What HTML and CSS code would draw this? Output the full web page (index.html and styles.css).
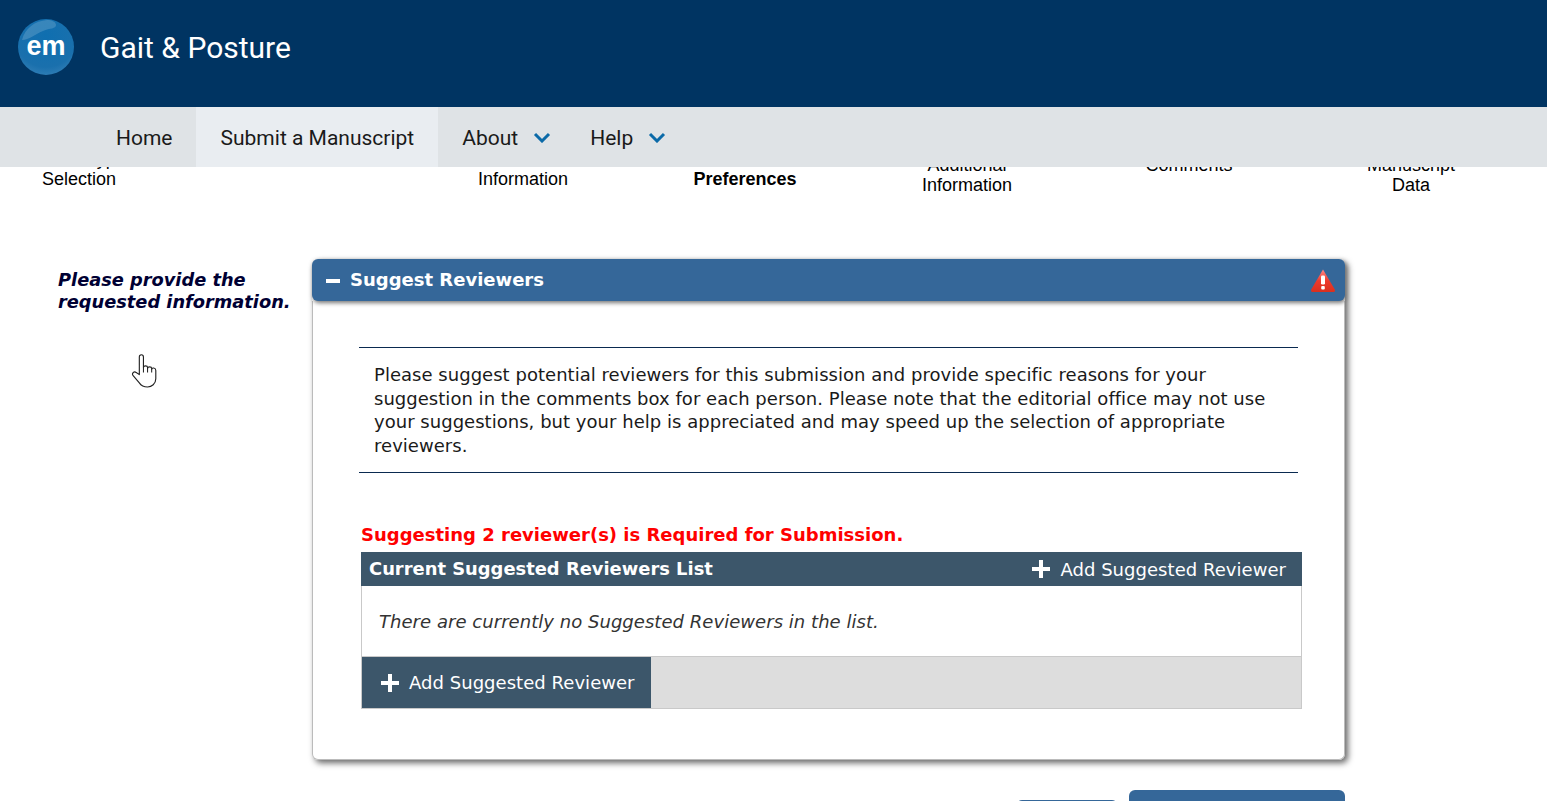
FILE: index.html
```html
<!DOCTYPE html>
<html lang="en">
<head>
<meta charset="utf-8">
<title>Gait &amp; Posture</title>
<link rel="stylesheet" href="styles.css">
</head>
<body>
<header class="banner">
  <svg class="logo" width="58" height="58" viewBox="0 0 58 58" aria-hidden="true">
    <defs>
      <radialGradient id="orb" cx="0.5" cy="0.3" r="0.8">
        <stop offset="0" stop-color="#0f6fb0"/>
        <stop offset="0.7" stop-color="#1a70ad"/>
        <stop offset="1" stop-color="#3a84ba"/>
      </radialGradient>
    </defs>
    <circle cx="29" cy="29" r="28" fill="url(#orb)"/>
    <path d="M5 22C8 10 18 3 30 2c5 0 9 2 9 5 0 4-6 3-13 6-8 3-14 9-21 9z" fill="#fff" opacity=".16"/>
    <text x="29" y="37" text-anchor="middle" class="logo-text">em</text>
  </svg>
  <h1 class="journal">Gait &amp; Posture</h1>
</header>
<nav class="nav">
  <a class="nav-item">Home</a>
  <a class="nav-item nav-active">Submit a Manuscript</a>
  <a class="nav-item nav-menu">About
    <svg class="chev" width="18" height="11" viewBox="0 0 18 11" aria-hidden="true"><path d="M2 2l7 7 7-7" fill="none" stroke="#0b6aa8" stroke-width="3"/></svg>
  </a>
  <a class="nav-item nav-menu">Help
    <svg class="chev" width="18" height="11" viewBox="0 0 18 11" aria-hidden="true"><path d="M2 2l7 7 7-7" fill="none" stroke="#0b6aa8" stroke-width="3"/></svg>
  </a>
</nav>
<ol class="steps">
  <li class="step">Article Type<br>Selection</li>
  <li class="step">Attach Files</li>
  <li class="step">General<br>Information</li>
  <li class="step step-current">Review<br>Preferences</li>
  <li class="step step-low">Additional<br>Information</li>
  <li class="step step-low">Comments</li>
  <li class="step step-low">Manuscript<br>Data</li>
</ol>
<main class="main">
  <aside class="hint">
    <p class="hint-text">Please provide the requested information.</p>
  </aside>
  <div class="content">
    <section class="panel">
      <h2 class="panel-head">
        <span class="minus"></span>
        <span class="panel-title">Suggest Reviewers</span>
        <svg class="warn" width="26" height="25" viewBox="0 0 26 25" aria-hidden="true">
          <defs>
            <linearGradient id="warnfill" x1="0" y1="0" x2="0" y2="1">
              <stop offset="0" stop-color="#f88"/>
              <stop offset="0.5" stop-color="#ee3a2c"/>
              <stop offset="1" stop-color="#d9301f"/>
            </linearGradient>
          </defs>
          <path d="M13 1.500L24.800 21.500Q25.500 24 23.500 24H2.500Q.5 24 1.200 21.500Z" fill="url(#warnfill)"/>
          <rect x="11" y="7.500" width="4" height="9" rx="1.200" fill="#fff"/>
          <rect x="11.200" y="18" width="3.600" height="3.600" rx="1" fill="#fff"/>
        </svg>
      </h2>
      <div class="panel-body">
        <p class="intro">Please suggest potential reviewers for this submission and provide specific reasons for your suggestion in the comments box for each person. Please note that the editorial office may not use your suggestions, but your help is appreciated and may speed up the selection of appropriate reviewers.</p>
        <p class="required">Suggesting 2 reviewer(s) is Required for Submission.</p>
        <div class="list">
          <div class="list-head">
            <span class="list-title">Current Suggested Reviewers List</span>
            <a class="add add-top"><span class="plus"></span>Add Suggested Reviewer</a>
          </div>
          <div class="list-empty">There are currently no Suggested Reviewers in the list.</div>
          <div class="list-foot">
            <a class="add add-foot"><span class="plus"></span>Add Suggested Reviewer</a>
          </div>
        </div>
      </div>
    </section>
    <div class="actions">
      <span class="btn btn-back"></span>
      <span class="btn btn-next"></span>
    </div>
  </div>
</main>
<svg class="cursor" width="29" height="35" viewBox="0 0 28 34" aria-hidden="true">
  <path d="M8 21V4c0-3 4-3 4 0v10c0-2 4-2 4 0v1c0-2 4-2 4 0v1c0-2 4-2 4 1v8c0 5-4 8-8 8s-6-1-8-4l-6-7c-2-2 1-5 3-3z" fill="#fff" stroke="#222" stroke-width="1.100" stroke-linejoin="round"/>
  <path d="M12 14v5M16 15v4M20 16v3" fill="none" stroke="#222" stroke-width="1"/>
</svg>
</body>
</html>
```
FILE: styles.css
```css
* { box-sizing: border-box; }
html, body { margin: 0; padding: 0; height: 801px; overflow: hidden; background: #fff; }
body { font-family: "DejaVu Sans", Verdana, sans-serif; color: #111; position: relative; }

.banner { height: 107px; background: #003462; display: flex; align-items: flex-start; padding: 18px 0 0 17px; }
.logo { flex: none; display: block; }
.logo-text { font-family: "Liberation Sans", sans-serif; font-weight: 700; font-size: 27px; fill: #fff; }
.journal { margin: 8px 0 0 25px; font: 400 30px/44px Roboto, sans-serif; color: #fff; }

.nav { position: relative; z-index: 2; height: 60px; background: #dfe3e6; display: flex; padding-left: 92px; font: 400 21px/62px Roboto, sans-serif; color: #1a1a1a; }
.nav-item { padding: 1px 24px 0; display: flex; align-items: center; }
.nav-menu { padding-right: 15px; }
.nav-active { background: #e9edf1; margin-left: -1px; padding-left: 25px; }
.chev { margin: 0 0 0 15px; }

.steps { list-style: none; display: flex; margin: -18px 0 0 -32px; padding: 0; height: 75px; font: 400 18px/20px "Liberation Sans", sans-serif; color: #000; }
.step { flex: 0 0 222px; text-align: center; }
.step-low { padding-top: 6px; }
.step-current { font-weight: 700; }

.main { display: flex; padding: 35px 0 0 58px; }
.hint { flex: 0 0 254px; }
.hint-text { margin: 10px 0 0; width: 245px; font-size: 17.800px; line-height: 22px; font-weight: 700; font-style: italic; color: #000033; }
.content { flex: 0 0 1033px; width: 1033px; }

.panel { box-shadow: 3px 3px 6px #666; border-radius: 6px; background: #fff; }
.panel-head { margin: 0; height: 42px; display: flex; align-items: center; padding: 0 8px 0 14px; background: #356799; border-radius: 6px; box-shadow: 1px 2px 4px #777; position: relative; }
.minus { width: 14px; height: 4px; background: #fff; flex: none; margin: 2px 10px 0 0; }
.panel-title { flex: 1; padding-bottom: 2px; font-size: 18px; font-weight: 700; color: #fff; }
.warn { flex: none; margin: 1px 1px 0 0; }
.panel-body { height: 459px; padding: 46px 0 0 46px; border: 1px solid #bbb; border-top: 0; border-radius: 0 0 6px 6px; }

.intro { margin: 0; width: 939px; padding: 15px 14px 15px 15px; border-top: 1px solid #0a2a50; border-bottom: 1px solid #0a2a50; font-size: 18px; line-height: 23.600px; letter-spacing: .03px; color: #1a1a1a; }
.required { margin: 50px 0 5px 2px; font-size: 18px; line-height: 24px; font-weight: 700; color: #f00; }

.list { width: 941px; margin-left: 2px; }
.list-head { height: 34px; background: #3c566a; display: flex; align-items: center; justify-content: space-between; padding: 0 16px 2px 8px; color: #fff; }
.list-title { font-size: 17.900px; font-weight: 700; }
.add { display: flex; align-items: center; color: #fff; font-size: 18px; letter-spacing: .04px; white-space: nowrap; }
.add-top { margin-top: 2px; }
.plus { width: 18px; height: 18px; margin-right: 10px; flex: none; background: linear-gradient(#fff, #fff) center / 18px 4px no-repeat, linear-gradient(#fff, #fff) center / 4px 18px no-repeat; }
.list-empty { height: 71px; border: 1px solid #c9c9c9; border-top: 0; padding: 0 17px; display: flex; align-items: center; font-size: 18px; font-style: italic; letter-spacing: .04px; color: #333; }
.list-foot { height: 52px; background: #ddd; border: 1px solid #c9c9c9; border-top: 0; display: flex; }
.add-foot { background: #3c566a; padding: 0 0 0 19px; width: 289px; }

.actions { display: flex; justify-content: flex-end; align-items: flex-start; gap: 11px; margin-top: 30px; }
.btn { display: block; height: 40px; }
.btn-back { width: 102px; margin-top: 10px; border: 1px solid #356799; border-radius: 6px; background: #fff; }
.btn-next { width: 216px; background: #356799; border-radius: 6px; }

.cursor { position: absolute; left: 131px; top: 353px; z-index: 3; }
```
